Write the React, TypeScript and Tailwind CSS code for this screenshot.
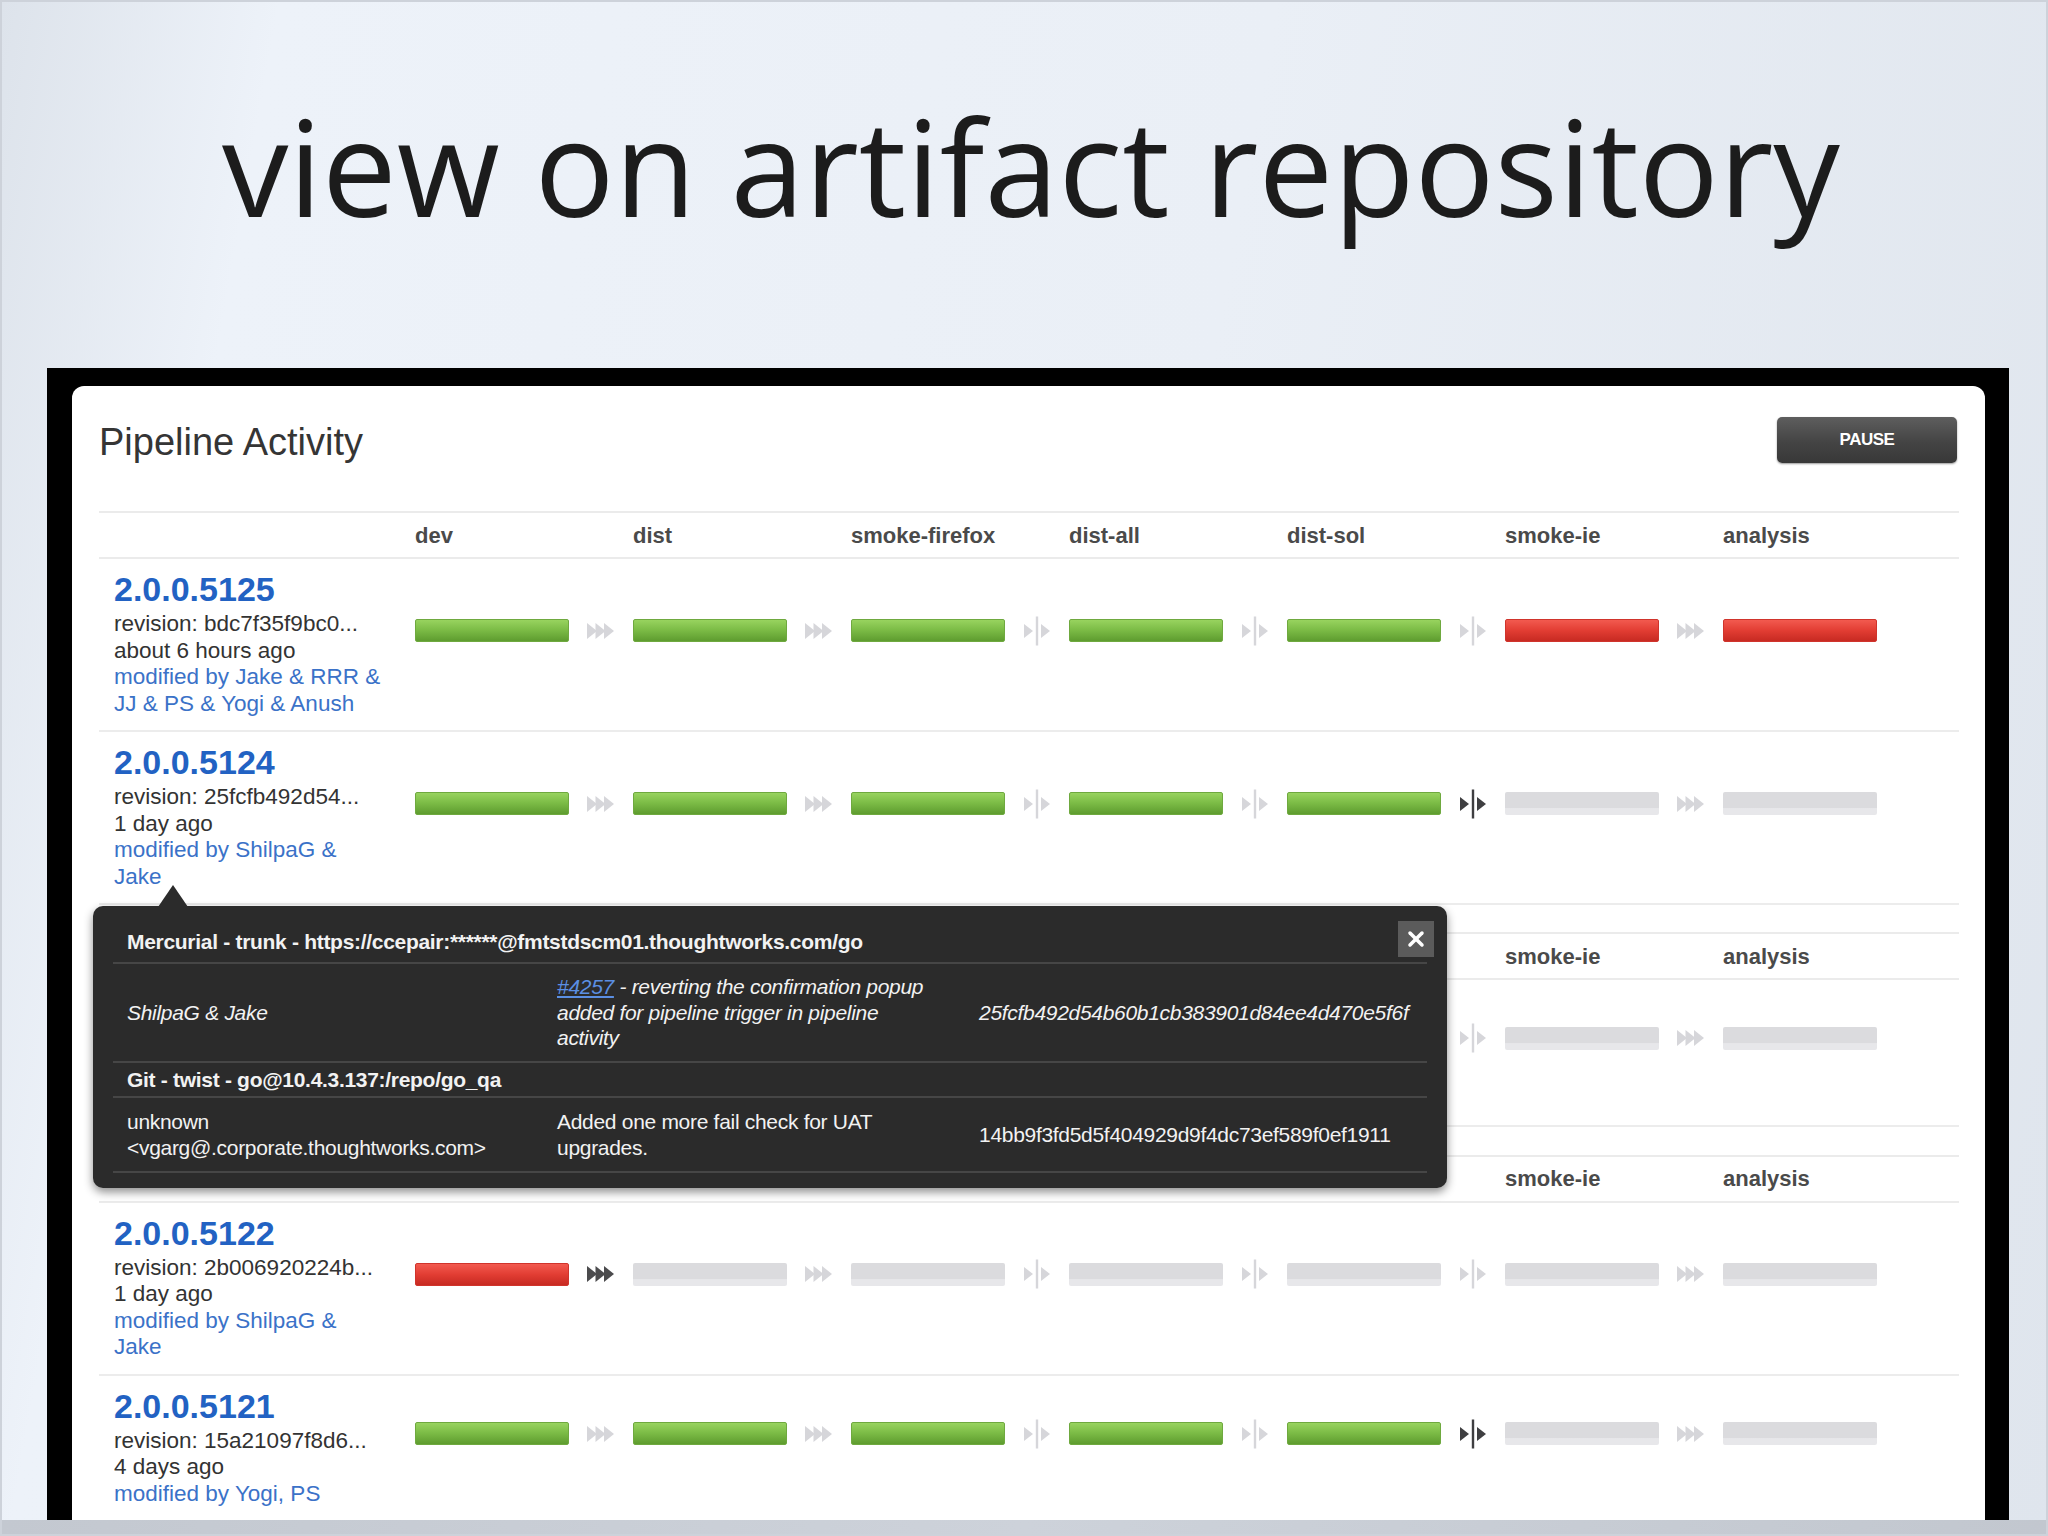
import React from "react";
import { X } from "lucide-react";

type Stage = "g" | "r" | "x";
type Row = {
  v: string;
  rev: string;
  time: string;
  mod: string[];
  stages: Stage[];
  dark?: number;
};

const STAGES = ["dev", "dist", "smoke-firefox", "dist-all", "dist-sol", "smoke-ie", "analysis"];
const KINDS: ("auto" | "manual")[] = ["auto", "auto", "manual", "manual", "manual", "auto"];

const BAR: Record<Stage, string> = {
  g: "bg-[linear-gradient(180deg,#98d35f_0%,#7dbd47_45%,#5e9c2f_100%)] border border-[#6fa93f]",
  r: "bg-[linear-gradient(180deg,#f25a4f_0%,#e23d33_50%,#c72a22_100%)] border border-[#d0342c]",
  x: "bg-[linear-gradient(180deg,#dbdbde_0%,#dbdbde_68%,#e7e7ea_72%,#e7e7ea_100%)]",
};

function AutoArrow({ dark }: { dark?: boolean }) {
  const c = dark ? "#4b4b4d" : "#d6d6da";
  return (
    <svg width="28" height="16" viewBox="0 0 28 16">
      <polygon points="0,0 10,8 0,16" fill={c} />
      <polygon points="8.5,0 18.5,8 8.5,16" fill={c} />
      <polygon points="17,0 27,8 17,16" fill={c} />
    </svg>
  );
}

function ManualArrow({ dark }: { dark?: boolean }) {
  const c = dark ? "#3f3f41" : "#d6d6da";
  return (
    <svg width="30" height="30" viewBox="0 0 30 30">
      <polygon points="2,8 11,15 2,22" fill={c} />
      <rect x="13.8" y="0.5" width="2.4" height="29" fill={c} />
      <polygon points="19,8 28,15 19,22" fill={c} />
    </svg>
  );
}

function Header({ coveredUpTo = -1 }: { coveredUpTo?: number }) {
  return (
    <div className="flex h-[48px] items-center border-y-2 border-[#ebebeb] text-[22px] font-bold text-[#4a4a4a]">
      <div className="w-[316px]" />
      {STAGES.map((s, i) => (
        <div key={s} className={i <= coveredUpTo ? "invisible w-[218px]" : "w-[218px]"}>
          {s}
        </div>
      ))}
    </div>
  );
}

function PipelineRow({ row, covered }: { row: Row; covered?: boolean }) {
  return (
    <div className="flex border-b-2 border-[#ececec]">
      <div className={covered ? "invisible w-[316px] pl-[15px] pt-[12px] pb-[13px]" : "w-[316px] pl-[15px] pt-[12px] pb-[13px]"}>
        <div className="text-[34px] font-bold leading-[36px] text-[#2262c3]">{row.v}</div>
        <div className="mt-[4px] text-[22.5px] leading-[26.5px]">
          <div className="text-[#333333]">revision: {row.rev}</div>
          <div className="text-[#333333]">{row.time}</div>
          {row.mod.map((m, i) => (
            <div key={i} className="text-[#3b72c8]">
              {m}
            </div>
          ))}
        </div>
      </div>
      <div className="flex items-center pb-[28px]">
        {row.stages.map((s, i) => (
          <div key={i} className="flex w-[218px] items-center">
            <div className={`h-[23px] w-[154px] rounded-[2px] ${BAR[s]}`} />
            {i < 6 && (
              <div className="flex w-[64px] justify-center">
                {KINDS[i] === "auto" ? (
                  <AutoArrow dark={row.dark === i} />
                ) : (
                  <ManualArrow dark={row.dark === i} />
                )}
              </div>
            )}
          </div>
        ))}
      </div>
    </div>
  );
}

function Group({ rows, className, covered }: { rows: Row[]; className: string; covered?: boolean }) {
  return (
    <div className={className}>
      <Header coveredUpTo={covered ? 4 : -1} />
      {rows.map((r) => (
        <PipelineRow key={r.v} row={r} covered={covered} />
      ))}
    </div>
  );
}

const G1: Row[] = [
  {
    v: "2.0.0.5125",
    rev: "bdc7f35f9bc0...",
    time: "about 6 hours ago",
    mod: ["modified by Jake & RRR &", "JJ & PS & Yogi & Anush"],
    stages: ["g", "g", "g", "g", "g", "r", "r"],
  },
  {
    v: "2.0.0.5124",
    rev: "25fcfb492d54...",
    time: "1 day ago",
    mod: ["modified by ShilpaG &", "Jake"],
    stages: ["g", "g", "g", "g", "g", "x", "x"],
    dark: 4,
  },
];

const G2: Row[] = [
  {
    v: "2.0.0.5123",
    rev: "14bb9f3fd5d5...",
    time: "1 day ago",
    mod: ["modified by unknown"],
    stages: ["g", "x", "x", "x", "x", "x", "x"],
  },
];

const G3: Row[] = [
  {
    v: "2.0.0.5122",
    rev: "2b006920224b...",
    time: "1 day ago",
    mod: ["modified by ShilpaG &", "Jake"],
    stages: ["r", "x", "x", "x", "x", "x", "x"],
    dark: 0,
  },
  {
    v: "2.0.0.5121",
    rev: "15a21097f8d6...",
    time: "4 days ago",
    mod: ["modified by Yogi, PS"],
    stages: ["g", "g", "g", "g", "g", "x", "x"],
    dark: 4,
  },
];

function Popup() {
  return (
    <div className="absolute left-[91px] top-[904px] h-[282px] w-[1354px] rounded-[10px] bg-[#2b2b2b] px-[20px] pt-[16px] text-[21px] text-[#f2f2f2] shadow-[0_4px_10px_rgba(0,0,0,0.45)]">
      <svg className="absolute left-[65px] top-[-21px]" width="30" height="22" viewBox="0 0 30 22">
        <polygon points="0,22 15,0 30,22" fill="#2b2b2b" />
      </svg>
      <div className="absolute right-[13px] top-[15px] flex h-[36px] w-[36px] items-center justify-center bg-[#5b5b5b]">
        <X size={24} strokeWidth={3.5} color="#ffffff" />
      </div>
      <div className="flex h-[42px] items-center border-b-2 border-[#464646] pl-[14px] font-bold tracking-[-0.3px]">
        Mercurial - trunk - https://ccepair:******@fmtstdscm01.thoughtworks.com/go
      </div>
      <div className="grid h-[99px] grid-cols-[430px_422px_1fr] items-center border-b-2 border-[#464646] pl-[14px] italic leading-[25.5px] tracking-[-0.3px]">
        <div>ShilpaG &amp; Jake</div>
        <div>
          <span className="text-[#5b8fe3] underline">#4257</span> - reverting the confirmation popup
          <br />
          added for pipeline trigger in pipeline
          <br />
          activity
        </div>
        <div>25fcfb492d54b60b1cb383901d84ee4d470e5f6f</div>
      </div>
      <div className="flex h-[35px] items-center border-b-2 border-[#464646] pl-[14px] font-bold tracking-[-0.3px]">
        Git - twist - go@10.4.3.137:/repo/go_qa
      </div>
      <div className="grid h-[75px] grid-cols-[430px_422px_1fr] items-center border-b-2 border-[#464646] pl-[14px] leading-[25.5px] tracking-[-0.3px]">
        <div>
          unknown
          <br />
          &lt;vgarg@.corporate.thoughtworks.com&gt;
        </div>
        <div>
          Added one more fail check for UAT
          <br />
          upgrades.
        </div>
        <div>14bb9f3fd5d5f404929d9f4dc73ef589f0ef1911</div>
      </div>
    </div>
  );
}

export default function App() {
  return (
    <div className="relative h-[1536px] w-[2048px] overflow-hidden border-2 border-[#cdd2da] bg-[linear-gradient(100deg,#dde3eb_0%,#edf2f9_12%,#eaeff6_55%,#dfe5ed_100%)] font-['Liberation_Sans',Arial,sans-serif]">
      <div className="h-[366px] pl-[14px] pt-[97px] text-center font-['Open_Sans',sans-serif] text-[133px] leading-none text-[#1c1c1c]">
        view on artifact repository
      </div>
      <div className="ml-[45px] h-[1152px] w-[1962px] bg-black pl-[25px] pt-[18px]">
        <div className="h-[1134px] w-[1913px] overflow-hidden rounded-t-[12px] bg-white pl-[27px] pr-[26px]">
          <div className="flex items-start justify-between pt-[31px]">
            <div className="mt-[6px] text-[38px] leading-none text-[#353535]">Pipeline Activity</div>
            <div className="mr-[2px] flex h-[46px] w-[180px] items-center justify-center rounded-[5px] bg-[linear-gradient(180deg,#5e5e5e_0%,#444444_55%,#383838_100%)] text-[17px] font-bold tracking-[-0.5px] text-white shadow-[0_1px_2px_rgba(0,0,0,0.4)]">
              PAUSE
            </div>
          </div>
          <Group rows={G1} className="mt-[48px]" />
          <Group rows={G2} className="mt-[27px]" covered />
          <Group rows={G3} className="mt-[28px]" />
        </div>
      </div>
      <div className="h-[14px] bg-[linear-gradient(90deg,#c3c8d0_0%,#cdd2da_50%,#c2c7cf_100%)]" />
      <Popup />
    </div>
  );
}
